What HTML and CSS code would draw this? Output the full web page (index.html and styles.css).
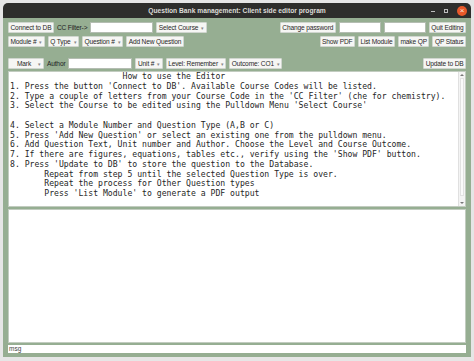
FILE: index.html
```html
<!DOCTYPE html>
<html lang="en">
<head>
    <meta charset="UTF-8">
    <title>Question Bank management: Client side editor program</title>
    <link rel="stylesheet" href="styles.css">
</head>
<body>
    <div class="window">
        <div class="titlebar">
            <span></span>
            <span class="title">Question Bank management: Client side editor program</span>
            <div class="controls">
                <span class="ctl-min"></span>
                <span class="ctl-max"></span>
                <span class="ctl-close">&times;</span>
            </div>
        </div>
        <div class="body">
            <div class="row">
                <div class="group">
                    <span class="btn">Connect to DB</span>
                    <span class="label">CC Filter-&gt;</span>
                    <span class="entry cc"></span>
                    <span class="btn menu">Select Course</span>
                </div>
                <div class="group">
                    <span class="btn">Change password</span>
                    <span class="entry pw"></span>
                    <span class="entry pw"></span>
                    <span class="btn">Quit Editing</span>
                </div>
            </div>
            <div class="row">
                <div class="group">
                    <span class="btn menu">Module #</span>
                    <span class="btn menu">Q Type</span>
                    <span class="btn menu">Question #</span>
                    <span class="btn">Add New Question</span>
                </div>
                <div class="group">
                    <span class="btn">Show PDF</span>
                    <span class="btn">List Module</span>
                    <span class="btn">make QP</span>
                    <span class="btn">QP Status</span>
                </div>
            </div>
            <div class="row spaced">
                <div class="group">
                    <span class="btn menu mark">Mark</span>
                    <span class="label">Author</span>
                    <span class="entry author"></span>
                    <span class="btn menu">Unit #</span>
                    <span class="btn menu">Level: Remember</span>
                    <span class="btn menu">Outcome: CO1</span>
                </div>
                <div class="group">
                    <span class="btn">Update to DB</span>
                </div>
            </div>
            <div class="text-box">
<pre class="editor">                       How to use the Editor
1. Press the button 'Connect to DB'. Available Course Codes will be listed.
2. Type a couple of letters from your Course Code in the 'CC Filter' (che for chemistry).
3. Select the Course to be edited using the Pulldown Menu 'Select Course'

4. Select a Module Number and Question Type (A,B or C)
5. Press 'Add New Question' or select an existing one from the pulldown menu.
6. Add Question Text, Unit number and Author. Choose the Level and Course Outcome.
7. If there are figures, equations, tables etc., verify using the 'Show PDF' button.
8. Press 'Update to DB' to store the question to the Database.
       Repeat from step 5 until the selected Question Type is over.
       Repeat the process for Other Question types
       Press 'List Module' to generate a PDF output</pre>
                <div class="scrollbar">
                    <span class="arrow up"></span>
                    <span class="thumb"></span>
                    <span class="arrow down"></span>
                </div>
            </div>
            <div class="text-box lower"></div>
            <div class="msg">msg</div>
        </div>
    </div>
</body>
</html>
```
FILE: styles.css
```css
html, body {
    margin: 0;
    padding: 0;
}
body {
    width: 474px;
    height: 361px;
    overflow: hidden;
    background-color: #e6e6e6;
    font-family: "Liberation Sans", Arial, sans-serif;
    color: #333;
}
.window {
    margin: 3px 3px 0 3px;
}
.titlebar {
    height: 15px;
    background-color: #2e2e2c;
    border-radius: 5px 5px 0 0;
    display: grid;
    grid-template-columns: 1fr auto 1fr;
    align-items: center;
}
.title {
    color: #dcdcd8;
    font-weight: bold;
    font-size: 6.7px;
}
.controls {
    justify-self: end;
    display: flex;
    align-items: center;
    gap: 9px;
    padding-right: 4px;
}
.ctl-min {
    width: 4px;
    height: 1px;
    margin-top: 2px;
    background-color: #bdbdbd;
}
.ctl-max {
    width: 4px;
    height: 4px;
    border: 1px solid #bdbdbd;
    box-sizing: border-box;
}
.ctl-close {
    width: 10px;
    height: 10px;
    border-radius: 50%;
    background-color: #e9592a;
    color: #fbe6dc;
    font-size: 8px;
    line-height: 10px;
    text-align: center;
}
.body {
    background-color: #96ae92;
    padding: 4px 5px;
}
.row {
    display: flex;
    justify-content: space-between;
    height: 11px;
}
.row + .row {
    margin-top: 3px;
}
.row.spaced {
    margin-top: 11px;
}
.group {
    display: flex;
    gap: 3px;
}
.btn, .label, .entry {
    height: 11px;
    box-sizing: border-box;
    font-size: 6.6px;
    letter-spacing: -0.15px;
    line-height: 9px;
    white-space: nowrap;
}
.btn {
    background-color: #f6f6f4;
    border: 1px solid #d0d6cf;
    border-radius: 1px;
    padding: 0 1.5px;
    color: #262626;
}
.menu::after {
    content: "\25BE";
    font-size: 5px;
    color: #888;
    margin-left: 3px;
}
.mark {
    padding-left: 8px;
    padding-right: 2px;
}
.mark::after {
    margin-left: 7px;
}
.label {
    padding: 0;
    color: #222;
    line-height: 11px;
}
.entry {
    background-color: #fff;
    border: 1px solid #b4bdb2;
}
.entry.cc {
    width: 63px;
}
.entry.pw {
    width: 42px;
}
.entry.author {
    width: 64px;
}
.text-box {
    margin-top: 2px;
    height: 136px;
    box-sizing: border-box;
    background-color: #fff;
    border: 1px solid #c2ccc0;
    display: flex;
}
.text-box.lower {
    height: 134px;
}
.editor {
    flex: 1;
    margin: 0;
    padding: 0 1px;
    font-family: "DejaVu Sans Mono", monospace;
    font-size: 8.15px;
    line-height: 9.75px;
    color: #262626;
    overflow: hidden;
}
.scrollbar {
    width: 6px;
    border-left: 1px solid #e0e0e0;
    background-color: #f4f4f4;
    display: flex;
    flex-direction: column;
    align-items: center;
}
.arrow {
    width: 0;
    height: 0;
    border-left: 2px solid transparent;
    border-right: 2px solid transparent;
    margin: 2px 0;
}
.arrow.up {
    border-bottom: 2px solid #777;
}
.arrow.down {
    border-top: 2px solid #777;
}
.thumb {
    flex: 1;
    width: 4px;
    background-color: #fafafa;
    border: 1px solid #e2e2e2;
    box-sizing: border-box;
    margin-bottom: 4px;
}
.msg {
    margin-top: 2px;
    height: 8px;
    background-color: #fff;
    font-size: 6.5px;
    line-height: 8px;
    padding-left: 1px;
    color: #444;
}
```
